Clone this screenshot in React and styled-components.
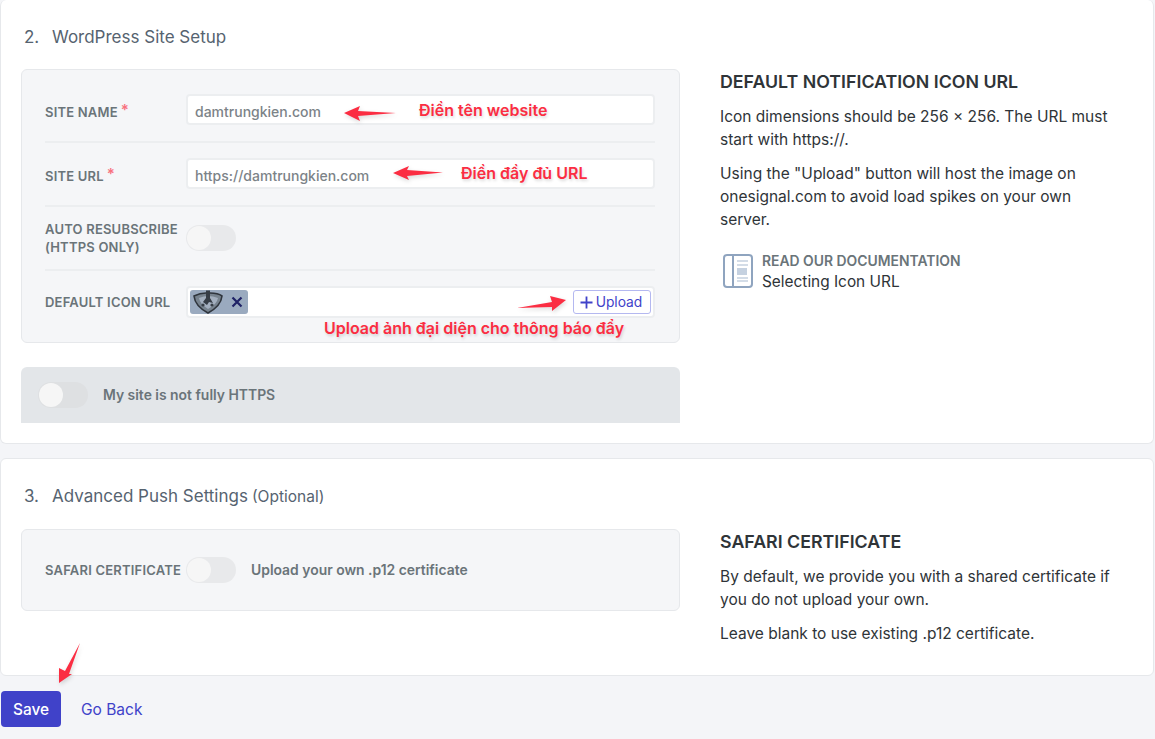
import styled, { createGlobalStyle } from "styled-components";

const GlobalStyle = createGlobalStyle`
  html, body {
    margin: 0;
    padding: 0;
    background: #f4f5f8;
    font-family: Inter, "Liberation Sans", sans-serif;
  }
`;

const Page = styled.div`
  position: relative;
  width: 1155px;
  height: 739px;
  overflow: hidden;
  display: flex;
  flex-direction: column;
`;

const Card = styled.section`
  width: 1154px;
  box-sizing: border-box;
  height: ${(p) => p.$height}px;
  margin-bottom: ${(p) => p.$after}px;
  padding: 27px 20px 0;
  background: #fff;
  border: 1px solid #e6e8eb;
  border-top: ${(p) => (p.$cut ? "none" : "1px solid #e6e8eb")};
  border-radius: 6px;
`;

const Title = styled.h2`
  margin: 0 0 ${(p) => p.$after}px 3px;
  display: flex;
  height: 20px;
  align-items: center;
  font-size: 17px;
  font-weight: 400;
  color: #566370;
`;

const Num = styled.span`
  width: 28px;
`;

const Optional = styled.small`
  margin-left: 4px;
  font-size: 15.5px;
  color: #566370;
`;

const Columns = styled.div`
  display: flex;
  gap: 40px;
`;

const Left = styled.div`
  width: 659px;
  flex-shrink: 0;
`;

const Panel = styled.div`
  box-sizing: border-box;
  height: ${(p) => p.$height}px;
  padding: ${(p) => p.$top}px 24px 0 23px;
  background: #f5f6f8;
  border: 1px solid #e6e8eb;
  border-radius: 6px;
`;

const Row = styled.div`
  display: flex;
  align-items: center;
  min-height: ${(p) => p.$height || 31}px;
  padding-bottom: ${(p) => p.$below ?? 16}px;
  margin-bottom: ${(p) => p.$next ?? 15}px;
  border-bottom: ${(p) => (p.$last ? "none" : "2px solid #eceef0")};
`;

const Label = styled.label`
  width: 141px;
  flex-shrink: 0;
  padding-top: ${(p) => (p.$drop ? 2 : 0)}px;
  font-size: 13px;
  line-height: 18px;
  font-weight: 600;
  letter-spacing: 0.2px;
  white-space: nowrap;
  color: #6a7479;
`;

const Star = styled.span`
  margin-left: 3px;
  font-size: 15px;
  vertical-align: 2px;
  color: #f8717f;
`;

const Field = styled.div`
  flex: 1;
  box-sizing: border-box;
  height: ${(p) => p.$height || 31}px;
  display: flex;
  align-items: center;
  justify-content: space-between;
  padding: ${(p) => p.$pad || "4px 7px 0"};
  background: #fff;
  border: 2px solid #eceef0;
  border-radius: 4px;
  font-size: 14px;
  font-weight: 500;
  color: #7c8388;
`;

const Track = styled.div`
  width: 50px;
  height: 26px;
  flex-shrink: 0;
  box-sizing: border-box;
  padding: 1px;
  background: ${(p) => p.$bg || "#e8e9eb"};
  border-radius: 13px;
`;

const Knob = styled.div`
  width: 24px;
  height: 24px;
  background: #f6f6f6;
  border-radius: 50%;
`;

const Chip = styled.div`
  width: 58px;
  height: 24px;
  display: flex;
  align-items: center;
  justify-content: space-between;
  padding: 0 5px 0 2px;
  box-sizing: border-box;
  background: #9aaabf;
  border-radius: 3px;
`;

const UploadButton = styled.button`
  width: 78px;
  height: 24px;
  padding: 0 2px 0 0;
  display: flex;
  align-items: center;
  justify-content: center;
  gap: 3px;
  background: #fff;
  border: 1px solid #b4b8f0;
  border-radius: 3px;
  font-family: inherit;
  font-size: 13.8px;
  color: #3f42c9;
`;

const Hint = styled.span`
  margin-left: 15px;
  font-size: 13.9px;
  font-weight: 600;
  color: #6a7479;
`;

const GreyBar = styled.div`
  height: 56px;
  margin-top: 24px;
  padding-left: 17px;
  display: flex;
  align-items: center;
  background: #e3e6e9;
  border-radius: 6px 6px 0 0;
`;

const Right = styled.aside`
  width: 420px;
  padding-top: 1px;
`;

const HelpTitle = styled.h3`
  margin: 0 0 11px;
  font-size: 17.8px;
  line-height: 24px;
  font-weight: 600;
  color: #2f3438;
`;

const HelpText = styled.p`
  margin: 0 0 11px;
  font-size: 15.5px;
  line-height: 23px;
  color: #2f3438;
`;

const Doc = styled.div`
  display: flex;
  align-items: center;
  gap: 9px;
  margin: 18px 0 0 3px;
`;

const DocText = styled.div`
  padding-top: 2px;
`;

const DocCaption = styled.div`
  font-size: 13.9px;
  line-height: 20px;
  font-weight: 600;
  color: #6a7479;
`;

const DocLink = styled.div`
  font-size: 15.4px;
  line-height: 21px;
  color: #2f3438;
`;

const Footer = styled.div`
  display: flex;
  align-items: center;
  gap: 20px;
  margin-left: 1px;
`;

const SaveButton = styled.button`
  width: 60px;
  height: 36px;
  padding: 0;
  background: #4042c9;
  border: none;
  border-radius: 4px;
  font-family: inherit;
  font-size: 15.4px;
  font-weight: 500;
  color: #fff;
`;

const BackLink = styled.a`
  font-size: 15.5px;
  color: #3f42c9;
`;

const Note = styled.span`
  position: absolute;
  left: ${(p) => p.$x}px;
  top: ${(p) => p.$y}px;
  font-size: 16px;
  line-height: 20px;
  font-weight: 600;
  color: #fb2d42;
  text-shadow: 1px 2px 3px rgba(0, 0, 0, 0.15);
  white-space: nowrap;
`;

const Arrows = styled.svg`
  position: absolute;
  left: 0;
  top: 0;
  pointer-events: none;
  filter: drop-shadow(1px 2px 2px rgba(0, 0, 0, 0.15));
`;

const Toggle = ({ bg }) => (
  <Track $bg={bg}>
    <Knob />
  </Track>
);

const ShieldIcon = () => (
  <svg width="32" height="24" viewBox="0 0 32 24">
    <path d="M2 6 Q8 3 14 3 L18 3 Q26 3 30 6 Q29 16 16 23 Q3 16 2 6Z" fill="#77838f" stroke="#2f353d" strokeWidth="1.6" />
    <path d="M7 8 Q12 6 16 6 Q21 6 26 8 Q25 14 16 19 Q8 14 7 8Z" fill="#a3afbf" />
    <path d="M14 0.5 L18 0.5 L18 8 L21 13 L17 12 L15 15 L11 12 L14 8Z" fill="#363d46" />
    <circle cx="11" cy="15" r="1.6" fill="#363d46" />
    <circle cx="20" cy="15" r="1.6" fill="#363d46" />
  </svg>
);

const CloseIcon = () => (
  <svg width="12" height="12" viewBox="0 0 12 12">
    <path d="M1.5 1.5 L10.5 10.5 M10.5 1.5 L1.5 10.5" stroke="#1f2266" strokeWidth="2.2" />
  </svg>
);

const PlusIcon = () => (
  <svg width="13" height="13" viewBox="0 0 13 13">
    <path d="M6.5 0.5 V12.5 M0.5 6.5 H12.5" stroke="#3f42c9" strokeWidth="1.8" />
  </svg>
);

const BookIcon = () => (
  <svg width="30" height="34" viewBox="0 0 30 34">
    <rect x="1" y="1" width="28" height="32" rx="3" fill="#fff" stroke="#8fa4bf" strokeWidth="2" />
    <path d="M10 1 V33" stroke="#8fa4bf" strokeWidth="2" />
    <path d="M14 7 H25 M14 11 H25 M14 24 H25 M14 27 H25" stroke="#c5d1e0" strokeWidth="1.5" />
    <rect x="14" y="14" width="10" height="7" fill="#c5d1e0" />
  </svg>
);

export default function App() {
  return (
    <Page>
      <GlobalStyle />
      <Card $height={444} $after={14} $cut>
        <Title $after={22}>
          <Num>2.</Num> WordPress Site Setup
        </Title>
        <Columns>
          <Left>
            <Panel $height={274} $top={24}>
              <Row>
                <Label $drop>
                  SITE NAME<Star>*</Star>
                </Label>
                <Field>damtrungkien.com</Field>
              </Row>
              <Row $next={13}>
                <Label $drop>
                  SITE URL<Star>*</Star>
                </Label>
                <Field>https://damtrungkien.com</Field>
              </Row>
              <Row $height={36} $below={13}>
                <Label>
                  AUTO RESUBSCRIBE
                  <br />
                  (HTTPS ONLY)
                </Label>
                <Toggle />
              </Row>
              <Row $last $height={32} $below={0} $next={0}>
                <Label>DEFAULT ICON URL</Label>
                <Field $height={32} $pad="0 2px">
                  <Chip>
                    <ShieldIcon />
                    <CloseIcon />
                  </Chip>
                  <UploadButton>
                    <PlusIcon />
                    Upload
                  </UploadButton>
                </Field>
              </Row>
            </Panel>
            <GreyBar>
              <Toggle bg="#dee0e2" />
              <Hint>My site is not fully HTTPS</Hint>
            </GreyBar>
          </Left>
          <Right>
            <HelpTitle>DEFAULT NOTIFICATION ICON URL</HelpTitle>
            <HelpText>
              Icon dimensions should be 256 × 256. The URL must
              <br />
              start with https://.
            </HelpText>
            <HelpText>
              Using the "Upload" button will host the image on
              <br />
              onesignal.com to avoid load spikes on your own
              <br />
              server.
            </HelpText>
            <Doc>
              <BookIcon />
              <DocText>
                <DocCaption>READ OUR DOCUMENTATION</DocCaption>
                <DocLink>Selecting Icon URL</DocLink>
              </DocText>
            </Doc>
          </Right>
        </Columns>
      </Card>
      <Card $height={218} $after={15}>
        <Title $after={23}>
          <Num>3.</Num> Advanced Push Settings <Optional>(Optional)</Optional>
        </Title>
        <Columns>
          <Left>
            <Panel $height={82} $top={27}>
              <Row $last $height={26} $below={0} $next={0}>
                <Label>SAFARI CERTIFICATE</Label>
                <Toggle />
                <Hint>Upload your own .p12 certificate</Hint>
              </Row>
            </Panel>
          </Left>
          <Right>
            <HelpTitle>SAFARI CERTIFICATE</HelpTitle>
            <HelpText>
              By default, we provide you with a shared certificate if
              <br />
              you do not upload your own.
            </HelpText>
            <HelpText>Leave blank to use existing .p12 certificate.</HelpText>
          </Right>
        </Columns>
      </Card>
      <Footer>
        <SaveButton>Save</SaveButton>
        <BackLink>Go Back</BackLink>
      </Footer>

      <Arrows width="1155" height="739" viewBox="0 0 1155 739">
        <g fill="#fb2d42">
          <polygon points="344,113 360,106 358,111 396,113 358,116 360,121" />
          <polygon points="393,173 409,166 407,170 443,172.5 407,176 409,180" />
          <polygon points="566,300 550,296 552,302 517,308 552,307 552,311" />
          <polygon points="59,683 59,668 65,671 80,643 69,674 72,674" />
        </g>
      </Arrows>
      <Note $x={419} $y={100}>Điền tên website</Note>
      <Note $x={461} $y={163}>Điền đầy đủ URL</Note>
      <Note $x={324} $y={318}>Upload ảnh đại diện cho thông báo đẩy</Note>
    </Page>
  );
}
